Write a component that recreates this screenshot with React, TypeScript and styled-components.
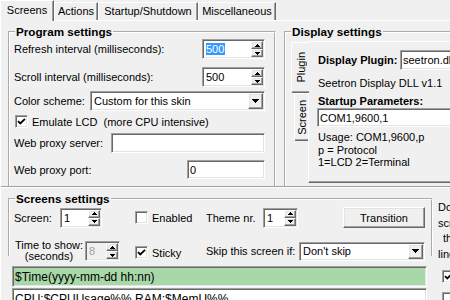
import React from "react";
import styled, { createGlobalStyle, css } from "styled-components";

const Global = createGlobalStyle`
  html, body { margin: 0; padding: 0; background: #f0f0f0; }
  body { font-family: "Liberation Sans", Arial, sans-serif; font-size: 11px; color: #000; }
  * { box-sizing: border-box; }
`;

const sunken = css`
  border: 1px solid;
  border-color: #a0a0a0 #ffffff #ffffff #a0a0a0;
  box-shadow: inset 1px 1px #696969, inset -1px -1px #e3e3e3;
`;

const raised = css`
  border: 1px solid;
  border-color: #ffffff #696969 #696969 #ffffff;
  box-shadow: inset -1px -1px #a0a0a0, inset 1px 1px #e3e3e3;
  background: #f0f0f0;
`;

const Window = styled.div`
  width: 450px;
  height: 300px;
  overflow: hidden;
  background: #f0f0f0;
  display: flex;
  flex-direction: column;
`;

const TabStrip = styled.div`
  display: flex;
  align-items: flex-end;
  height: 20px;
  flex-shrink: 0;
  position: relative;
  z-index: 2;
`;

const Tab = styled.div<{ $active?: boolean; $w: number }>`
  width: ${(p) => p.$w}px;
  height: ${(p) => (p.$active ? 21 : 18)}px;
  margin-bottom: ${(p) => (p.$active ? -1 : 0)}px;
  line-height: ${(p) => (p.$active ? 18 : 16)}px;
  text-align: center;
  white-space: nowrap;
  background: #f0f0f0;
  border-top: 1px solid #ffffff;
  border-left: 1px solid #ffffff;
  border-right: 1px solid #696969;
  box-shadow: inset -1px 0 #a0a0a0;
  flex-shrink: 0;
`;

const Page = styled.div`
  flex: 1;
  border-top: 1px solid #ffffff;
  border-left: 1px solid #ffffff;
  display: flex;
  flex-direction: column;
  min-height: 0;
`;

const TopPane = styled.div`
  height: 165px;
  flex-shrink: 0;
  overflow: hidden;
  display: flex;
  align-items: flex-start;
  padding-left: 7px;
`;

const Splitter = styled.div`
  height: 2px;
  flex-shrink: 0;
  border-top: 1px solid #a0a0a0;
  border-bottom: 1px solid #ffffff;
`;

const BottomPane = styled.div`
  flex: 1;
  display: flex;
  align-items: flex-start;
  padding-left: 7px;
`;

const Group = styled.fieldset<{ $w: number; $h: number; $ml?: number; $open?: boolean }>`
  margin: 4px 0 0 ${(p) => p.$ml ?? 0}px;
  padding: 0;
  width: ${(p) => p.$w}px;
  height: ${(p) => p.$h}px;
  min-width: 0;
  flex-shrink: 0;
  border: 2px groove #ffffff;
  ${(p) => p.$open && "border-bottom: none;"}
`;

const Legend = styled.legend`
  font-weight: bold;
  font-size: 11.7px;
  line-height: 13px;
  padding: 0 1px;
  margin-left: 5px;
`;

const Stack = styled.div<{ $pl?: number; $pr?: number; $pt?: number }>`
  display: flex;
  flex-direction: column;
  padding: ${(p) => p.$pt ?? 0}px ${(p) => p.$pr ?? 0}px 0 ${(p) => p.$pl ?? 0}px;
`;

const Row = styled.div<{ $mt?: number; $h: number; $spread?: boolean }>`
  display: flex;
  align-items: center;
  margin-top: ${(p) => p.$mt ?? 0}px;
  height: ${(p) => p.$h}px;
  justify-content: ${(p) => (p.$spread ? "space-between" : "flex-start")};
  white-space: nowrap;
`;

const Label = styled.span<{ $w?: number; $bold?: boolean }>`
  ${(p) => p.$w !== undefined && `width: ${p.$w}px; flex-shrink: 0;`}
  font-weight: ${(p) => (p.$bold ? "bold" : "normal")};
  white-space: pre;
`;

const TwoLine = styled.span<{ $w: number }>`
  width: ${(p) => p.$w}px;
  flex-shrink: 0;
  text-align: center;
  line-height: 11px;
`;

const Field = styled.div<{ $w: number; $h?: number; $bg?: string; $ml?: number; $mt?: number; $size?: number }>`
  ${sunken}
  width: ${(p) => p.$w}px;
  height: ${(p) => p.$h ?? 20}px;
  background: ${(p) => p.$bg ?? "#ffffff"};
  margin-left: ${(p) => p.$ml ?? 0}px;
  margin-top: ${(p) => p.$mt ?? 0}px;
  padding: 1px;
  display: flex;
  align-items: stretch;
  flex-shrink: 0;
  overflow: hidden;
  font-size: ${(p) => p.$size ?? 11}px;
`;

const FieldText = styled.div<{ $dim?: boolean; $pl?: number }>`
  flex: 1;
  display: flex;
  align-items: center;
  padding-left: ${(p) => p.$pl ?? 1}px;
  white-space: pre;
  overflow: hidden;
  color: ${(p) => (p.$dim ? "#a0a0a0" : "#000")};
`;

const Selected = styled.span`
  background: #3399ff;
  color: #ffffff;
  line-height: 12px;
  padding: 0 1px 0 0;
`;

const SpinCol = styled.div`
  width: 12px;
  display: flex;
  flex-direction: column;
  flex-shrink: 0;
`;

const SpinBtn = styled.div`
  ${raised}
  flex: 1;
  display: flex;
  align-items: center;
  justify-content: center;
`;

const DropBtn = styled.div`
  ${raised}
  width: 15px;
  flex-shrink: 0;
  display: flex;
  align-items: center;
  justify-content: center;
`;

const Button = styled.div<{ $w: number; $h: number; $ml?: number }>`
  ${raised}
  width: ${(p) => p.$w}px;
  height: ${(p) => p.$h}px;
  margin-left: ${(p) => p.$ml ?? 0}px;
  flex-shrink: 0;
  display: flex;
  align-items: center;
  justify-content: center;
`;

const CheckItem = styled.div<{ $w?: number; $ml?: number; $mt?: number }>`
  display: flex;
  align-items: center;
  gap: 4px;
  flex-shrink: 0;
  ${(p) => p.$w !== undefined && `width: ${p.$w}px;`}
  margin-left: ${(p) => p.$ml ?? 0}px;
  margin-top: ${(p) => p.$mt ?? 0}px;
  white-space: pre;
`;

const Box = styled.div<{ $ml?: number; $mt?: number }>`
  ${sunken}
  width: 13px;
  height: 13px;
  background: #ffffff;
  flex-shrink: 0;
  display: flex;
  align-items: center;
  justify-content: center;
  margin-left: ${(p) => p.$ml ?? 0}px;
  margin-top: ${(p) => p.$mt ?? 0}px;
`;

/* Display settings */
const DisplayBody = styled.div`
  display: flex;
  align-items: flex-start;
  padding: 3px 0 0 5px;
`;

const VTabs = styled.div`
  width: 17px;
  flex-shrink: 0;
  display: flex;
  flex-direction: column;
  padding-top: 1px;
  position: relative;
  z-index: 1;
`;

const VTab = styled.div<{ $active?: boolean }>`
  width: ${(p) => (p.$active ? 18 : 14)}px;
  height: ${(p) => (p.$active ? 51 : 48)}px;
  margin-left: ${(p) => (p.$active ? 0 : 3)}px;
  background: #f0f0f0;
  border-top: 1px solid #ffffff;
  border-left: 1px solid #ffffff;
  border-bottom: 1px solid #696969;
  box-shadow: inset 0 -1px #a0a0a0;
  border-radius: 2px 0 0 2px;
  display: flex;
  align-items: center;
  justify-content: center;
`;

const VText = styled.span`
  writing-mode: vertical-rl;
  transform: rotate(180deg);
  white-space: nowrap;
  line-height: 12px;
`;

const Panel = styled.div`
  width: 200px;
  height: 142px;
  flex-shrink: 0;
  border-top: 1px solid #ffffff;
  border-left: 1px solid #ffffff;
  border-bottom: 1px solid #696969;
  box-shadow: inset 0 -1px #a0a0a0;
  display: flex;
  flex-direction: column;
  padding: 8px 0 0 9px;
`;

const TextLine = styled.div<{ $mt?: number; $lh?: number; $bold?: boolean; $indent?: number }>`
  margin-top: ${(p) => p.$mt ?? 0}px;
  line-height: ${(p) => p.$lh ?? 13}px;
  font-weight: ${(p) => (p.$bold ? "bold" : "normal")};
  padding-left: ${(p) => p.$indent ?? 0}px;
  white-space: nowrap;
`;

/* Bottom */
const LeftCol = styled.div`
  width: 425px;
  flex-shrink: 0;
  display: flex;
  flex-direction: column;
`;

const RightCol = styled.div`
  display: flex;
  flex-direction: column;
  padding: 12px 0 0 5px;
  white-space: nowrap;
`;

const Lines = styled.div`
  margin: 10px 0 0 4px;
  width: 415px;
  display: flex;
  flex-direction: column;
  gap: 1px;
`;

const Tri = ({ up, w, h }: { up?: boolean; w: number; h: number }) => (
  <svg width={w} height={h} viewBox={`0 0 ${w} ${h}`} shapeRendering="crispEdges">
    <polygon points={up ? `0,${h} ${w / 2},0 ${w},${h}` : `0,0 ${w},0 ${w / 2},${h}`} fill="#000" />
  </svg>
);

const Check = () => (
  <svg width="9" height="9" viewBox="0 0 9 9">
    <polyline points="1,4.2 3.3,6.5 8,1.8" fill="none" stroke="#000" strokeWidth="1.8" />
  </svg>
);

function Spin({ w, h = 20, ml, dim, children }: { w: number; h?: number; ml?: number; dim?: boolean; children: React.ReactNode }) {
  return (
    <Field $w={w} $h={h} $ml={ml} $bg={dim ? "#f0f0f0" : "#ffffff"}>
      <FieldText $dim={dim} $pl={2}>{children}</FieldText>
      <SpinCol>
        <SpinBtn><Tri up w={5} h={3} /></SpinBtn>
        <SpinBtn><Tri w={5} h={3} /></SpinBtn>
      </SpinCol>
    </Field>
  );
}

function Combo({ w, h = 20, ml, children }: { w: number; h?: number; ml?: number; children: React.ReactNode }) {
  return (
    <Field $w={w} $h={h} $ml={ml}>
      <FieldText $pl={2}>{children}</FieldText>
      <DropBtn><Tri w={7} h={4} /></DropBtn>
    </Field>
  );
}

function CheckBox({ checked, label, w, ml, mt }: { checked?: boolean; label: string; w?: number; ml?: number; mt?: number }) {
  return (
    <CheckItem $w={w} $ml={ml} $mt={mt}>
      <Box>{checked && <Check />}</Box>
      <span>{label}</span>
    </CheckItem>
  );
}

export default function App() {
  return (
    <>
      <Global />
      <Window>
        <TabStrip>
          <Tab $active $w={54}>Screens</Tab>
          <Tab $w={44}>Actions</Tab>
          <Tab $w={100}>Startup/Shutdown</Tab>
          <Tab $w={78}>Miscellaneous</Tab>
        </TabStrip>
        <Page>
          <TopPane>
            <Group $w={268} $h={200}>
              <Legend>Program settings</Legend>
              <Stack $pl={4} $pr={9}>
                <Row $mt={1} $h={20} $spread>
                  <Label>Refresh interval (milliseconds):</Label>
                  <Spin w={63}><Selected>500</Selected></Spin>
                </Row>
                <Row $mt={8} $h={20} $spread>
                  <Label>Scroll interval (milliseconds):</Label>
                  <Spin w={63}>500</Spin>
                </Row>
                <Row $mt={4} $h={20} $spread>
                  <Label>Color scheme:</Label>
                  <Combo w={175}>Custom for this skin</Combo>
                </Row>
                <Row $mt={3} $h={15}>
                  <CheckBox checked label={"Emulate LCD  (more CPU intensive)"} ml={1} />
                </Row>
                <Row $mt={4} $h={20} $spread>
                  <Label>Web proxy server:</Label>
                  <Field $w={154} />
                </Row>
                <Row $mt={7} $h={19} $spread>
                  <Label>Web proxy port:</Label>
                  <Field $w={78} $h={19}><FieldText>0</FieldText></Field>
                </Row>
              </Stack>
            </Group>
            <Group $w={220} $h={200} $ml={8}>
              <Legend>Display settings</Legend>
              <DisplayBody>
                <VTabs>
                  <VTab $active><VText>Plugin</VText></VTab>
                  <VTab><VText>Screen</VText></VTab>
                </VTabs>
                <Panel>
                  <Row $h={20}>
                    <Label $w={82} $bold>Display Plugin:</Label>
                    <Field $w={80}><FieldText>seetron.dll</FieldText></Field>
                  </Row>
                  <TextLine $mt={7}>Seetron Display DLL v1.1</TextLine>
                  <TextLine $mt={5} $bold>Startup Parameters:</TextLine>
                  <Field $w={150} $h={19} $ml={-1}><FieldText>COM1,9600,1</FieldText></Field>
                  <TextLine $mt={4} $lh={12.5}>Usage: COM1,9600,p</TextLine>
                  <TextLine $lh={12.5}>p = Protocol</TextLine>
                  <TextLine $lh={12.5}>1=LCD 2=Terminal</TextLine>
                </Panel>
              </DisplayBody>
            </Group>
          </TopPane>
          <Splitter />
          <BottomPane>
            <LeftCol>
              <Group $w={425} $h={64} $open>
                <Legend>Screens settings</Legend>
                <Stack $pl={4}>
                  <Row $mt={2} $h={21}>
                    <Label $w={46}>Screen:</Label>
                    <Spin w={42}>1</Spin>
                    <CheckBox label="Enabled" w={71} ml={33} />
                    <Label $w={57}>Theme nr.</Label>
                    <Spin w={35}>1</Spin>
                    <Button $w={82} $h={21} $ml={45}>Transition</Button>
                  </Row>
                  <Row $mt={12} $h={22}>
                    <TwoLine $w={70}>Time to show:<br />(seconds)</TwoLine>
                    <Spin w={35} ml={1} dim>8</Spin>
                    <CheckBox checked label="Sticky" w={71} ml={15} mt={3} />
                    <Label $w={93}>Skip this screen if:</Label>
                    <Combo w={126} h={19}>Don't skip</Combo>
                  </Row>
                </Stack>
              </Group>
              <Lines>
                <Field $w={415} $h={21} $bg="#a8d8a8" $size={12}><FieldText>$Time(yyyy-mm-dd hh:nn)</FieldText></Field>
                <Field $w={415} $h={21} $size={12}><FieldText>CPU:$CPUUsage%% RAM:$MemU%%</FieldText></Field>
              </Lines>
            </LeftCol>
            <RightCol>
              <TextLine $lh={15.5}>Don't</TextLine>
              <TextLine $lh={15.5}>scroll</TextLine>
              <TextLine $lh={15.5} $indent={5}>this</TextLine>
              <TextLine $lh={15.5}>line</TextLine>
              <Box $ml={4} $mt={8}><Check /></Box>
              <Box $ml={4} $mt={9} />
            </RightCol>
          </BottomPane>
        </Page>
      </Window>
    </>
  );
}
